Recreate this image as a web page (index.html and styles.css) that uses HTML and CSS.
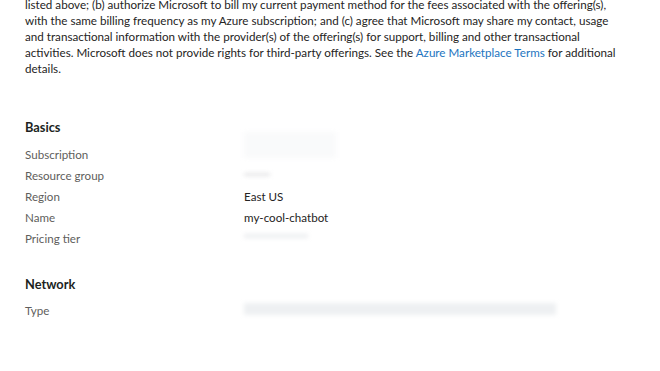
FILE: index.html
```html
<!DOCTYPE html>
<html>
<head>
<meta charset="utf-8">
<link rel="stylesheet" href="styles.css">
</head>
<body>
<main class="page">
  <p class="terms">listed above; (b) authorize Microsoft to bill my current payment method for the fees associated with the offering(s),<br>with the same billing frequency as my Azure subscription; and (c) agree that Microsoft may share my contact, usage<br>and transactional information with the provider(s) of the offering(s) for support, billing and other transactional<br>activities. Microsoft does not provide rights for third-party offerings. See the <a class="link" href="#">Azure Marketplace Terms</a> for additional<br>details.</p>

  <section class="section basics">
    <h2 class="heading">Basics</h2>
    <div class="grid">
      <div class="label">Subscription</div><div class="value"><span class="redact redact-sub"></span></div>
      <div class="label">Resource group</div><div class="value"><span class="redact redact-rg"></span></div>
      <div class="label">Region</div><div class="value">East US</div>
      <div class="label">Name</div><div class="value">my-cool-chatbot</div>
      <div class="label">Pricing tier</div><div class="value"><span class="redact redact-tier"></span></div>
    </div>
  </section>

  <section class="section network">
    <h2 class="heading heading-net">Network</h2>
    <div class="grid">
      <div class="label">Type</div><div class="value"><span class="redact redact-type"></span></div>
    </div>
  </section>
</main>
</body>
</html>
```
FILE: styles.css
```css
html, body {
  margin: 0;
  padding: 0;
  background: #ffffff;
}
body {
  font-family: "Lato", "Open Sans", sans-serif;
  font-size: 12px;
  color: #323130;
  overflow: hidden;
}
.page {
  padding: 0 25px;
  width: 620px;
}
.terms {
  margin: -3px 0 0 0;
  line-height: 16px;
  font-size: 11.65px;
  color: #252423;
  white-space: nowrap;
}
.link {
  color: #1b74c0;
  text-decoration: none;
}
.section {
  margin-top: 40px;
}
.network {
  margin-top: 25px;
}
.heading {
  margin: 0 0 7px 0;
  font-size: 12.8px;
  font-weight: 700;
  line-height: 20px;
  color: #201f1e;
}
.heading-net {
  margin-bottom: 6px;
}
.grid {
  display: grid;
  grid-template-columns: 219px 1fr;
  grid-auto-rows: 21px;
  align-items: center;
}
.label {
  color: #605e5c;
  font-size: 11.6px;
}
.value {
  color: #252423;
  font-size: 11.6px;
  position: relative;
  height: 21px;
  line-height: 21px;
}
.redact {
  position: absolute;
  left: 0;
  display: block;
  filter: blur(2px);
}
.redact-sub {
  top: -12px;
  width: 92px;
  height: 26px;
  background: #f9fafb;
}
.redact-rg {
  top: 8px;
  width: 26px;
  height: 3px;
  background: #e4e4e6;
}
.redact-tier {
  top: 6px;
  width: 64px;
  height: 4px;
  background: #eceef0;
}
.redact-type {
  top: 3px;
  width: 312px;
  height: 12px;
  background: #eef0f2;
}
```
